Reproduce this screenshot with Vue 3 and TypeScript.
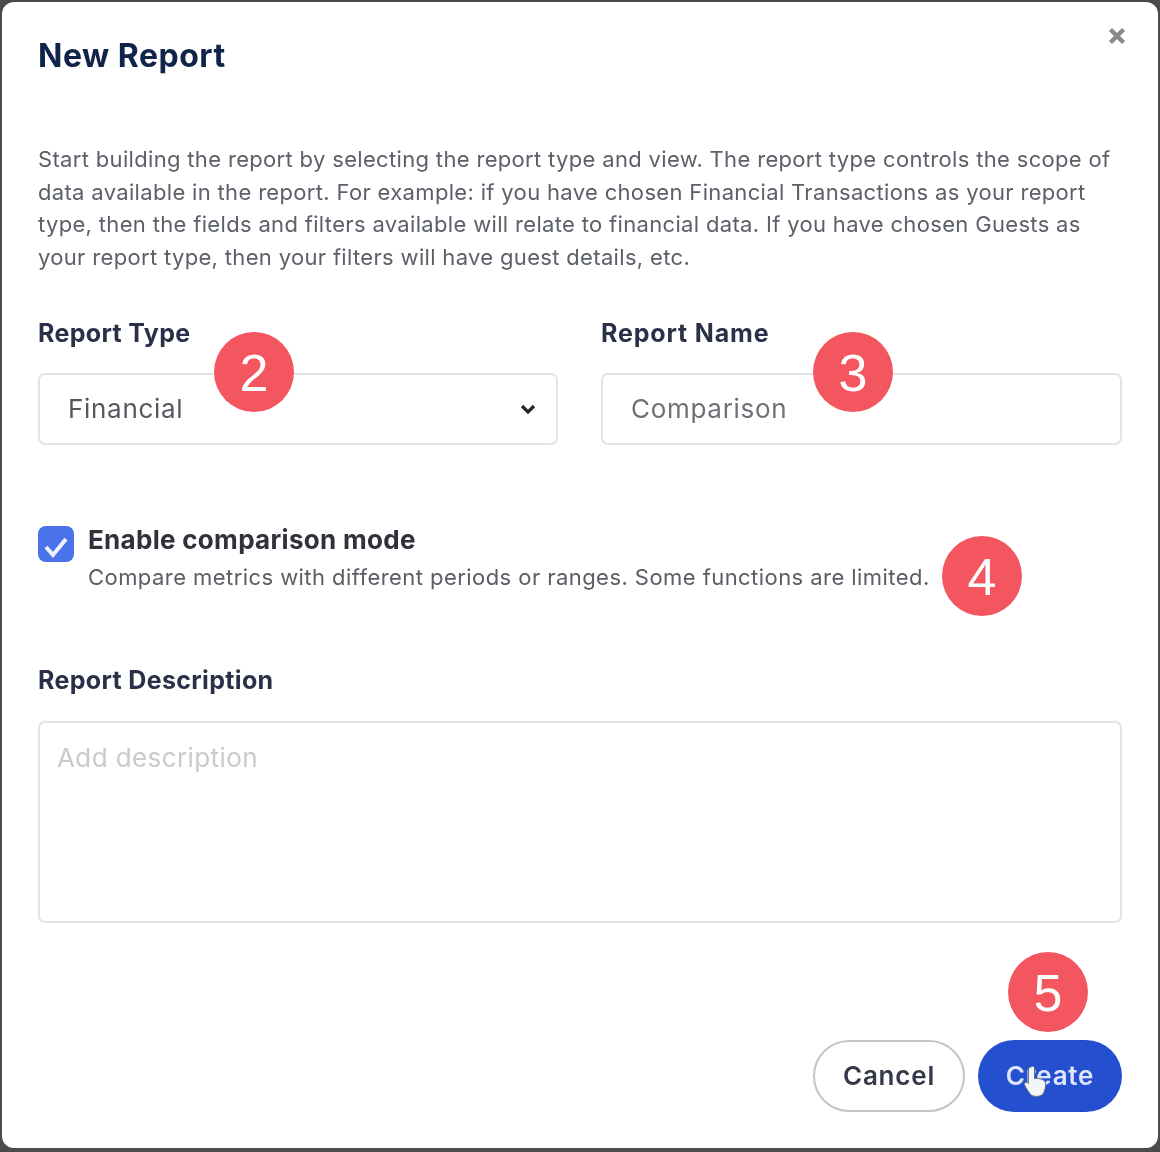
<template>
  <div class="page">
    <div class="modal">
      <button class="close" aria-label="Close">
        <svg width="20" height="20" viewBox="0 0 20 20"><path d="M3.5 3.5l13 13M16.5 3.5l-13 13" stroke="#8a8a8d" stroke-width="4.4" fill="none" /></svg>
      </button>
      <h1 class="title soft">New Report</h1>
      <p class="intro soft">
        <span v-for="line in introLines" :key="line">{{ line }}</span>
      </p>

      <div class="row">
        <div class="field">
          <label class="soft">Report Type</label>
          <div class="input select">
            <span class="soft">Financial</span>
            <svg class="soft" width="16" height="12" viewBox="0 0 16 12"><path d="M2 3l6 6 6-6" stroke="#23262f" stroke-width="3.2" fill="none" /></svg>
            <span class="badge badge-2">2</span>
          </div>
        </div>
        <div class="field">
          <label class="soft wide">Report Name</label>
          <div class="input name">
            <span class="soft">Comparison</span>
            <span class="badge badge-3">3</span>
          </div>
        </div>
      </div>

      <div class="compare">
        <span class="check soft">
          <svg width="36" height="36" viewBox="0 0 36 36"><path d="M8 21l7 8 13-16" stroke="#eef2ff" stroke-width="4" fill="none" /></svg>
        </span>
        <div>
          <div class="compare-title soft">Enable comparison mode</div>
          <div class="compare-sub">
            <span class="soft">Compare metrics with different periods or ranges. Some functions are limited.</span>
            <span class="badge badge-4">4</span>
          </div>
        </div>
      </div>

      <div class="field desc">
        <label class="soft">Report Description</label>
        <div class="textarea"><span class="soft">Add description</span></div>
      </div>

      <div class="actions">
        <button class="btn cancel"><span class="soft">Cancel</span></button>
        <button class="btn create">
          <span class="soft">Create</span>
          <span class="badge badge-5">5</span>
          <svg class="cursor soft" width="26" height="36" viewBox="0 0 26 36">
            <path d="M8 3c1.500-1.500 3.500-.5 3.500 1.500v10c3-.5 9 .5 10.500 3 1 3 .5 9-2.500 13-3 2.500-9 2.500-12 0-2-3-5-7-6-10-.5-2 2-3 4-1V4z" fill="#f4f5f8" stroke="#6a6f7c" stroke-width="1" />
          </svg>
        </button>
      </div>
    </div>
  </div>
</template>

<script setup lang="ts">
const introLines: string[] = [
  'Start building the report by selecting the report type and view. The report type controls the scope of',
  'data available in the report. For example: if you have chosen Financial Transactions as your report',
  'type, then the fields and filters available will relate to financial data. If you have chosen Guests as',
  'your report type, then your filters will have guest details, etc.',
]
</script>

<style>
body {
  background: #4b4b4d;
}
</style>

<style scoped>
.page {
  width: 1160px;
  height: 1152px;
  padding: 2px 2px 4px 2px;
  box-sizing: border-box;
  font-family: Inter, "Noto Sans", sans-serif;
}

.soft {
  display: inline-block;
  filter: blur(0.5px);
}

.modal {
  position: relative;
  height: 100%;
  box-sizing: border-box;
  background: #fff;
  border-radius: 12px;
  padding: 33px 36px 0 36px;
}

.close {
  position: absolute;
  top: 24px;
  right: 31px;
  padding: 0;
  border: 0;
  background: none;
  line-height: 0;
}

.title {
  display: block;
  margin: 0;
  font-size: 32px;
  line-height: 42px;
  font-weight: 700;
  letter-spacing: 0.5px;
  color: #10244a;
}

.intro {
  display: block;
  margin: 66px 0 0;
  font-size: 22px;
  line-height: 32.7px;
  letter-spacing: 0.33px;
  color: #5c6069;
  white-space: nowrap;
}

.intro span {
  display: block;
}

.row {
  display: grid;
  grid-template-columns: 520px 521px;
  column-gap: 43px;
  margin-top: 42px;
}

label {
  display: block;
  font-size: 25px;
  line-height: 34px;
  font-weight: 700;
  letter-spacing: 0.35px;
  color: #2a3048;
}

.wide {
  letter-spacing: 0.85px;
}

.input {
  position: relative;
  display: flex;
  align-items: center;
  justify-content: space-between;
  box-sizing: border-box;
  height: 72px;
  margin-top: 23px;
  padding: 0 20px 0 28px;
  border: 2px solid #e2e3e6;
  border-radius: 7px;
  font-size: 26px;
  letter-spacing: 0.7px;
  color: #55585f;
}

.input > span.soft {
  margin-top: -1px;
}

.name {
  color: #6d7076;
}

.badge {
  position: absolute;
  top: -43px;
  width: 80px;
  height: 80px;
  border-radius: 50%;
  background: #f4565f;
  color: #fff;
  font-family: "Liberation Sans", Arial, sans-serif;
  font-size: 52px;
  font-weight: 400;
  letter-spacing: 0;
  line-height: 82px;
  text-align: center;
}

.badge-2 {
  left: 174px;
}

.badge-3 {
  left: 210px;
}

.badge-4 {
  left: 854px;
  top: -24px;
}

.badge-5 {
  left: 30px;
  top: -88px;
}

.compare {
  display: flex;
  gap: 14px;
  margin-top: 78px;
}

.check {
  flex: none;
  width: 36px;
  height: 36px;
  margin-top: 3px;
  border-radius: 8px;
  background: #4a73ea;
}

.compare-title {
  display: block;
  font-size: 26px;
  line-height: 34px;
  font-weight: 700;
  letter-spacing: 0.3px;
  color: #2f323b;
}

.compare-sub {
  position: relative;
  margin-top: 3px;
  font-size: 22px;
  line-height: 34px;
  letter-spacing: 0.44px;
  color: #5a5d64;
  white-space: nowrap;
}

.desc {
  margin-top: 69px;
}

.textarea {
  box-sizing: border-box;
  height: 202px;
  margin-top: 24px;
  padding: 18px 17px;
  border: 2px solid #e2e3e6;
  border-radius: 7px;
  font-size: 26px;
  line-height: 34px;
  letter-spacing: 0.4px;
  color: #c9cace;
}

.actions {
  display: flex;
  justify-content: flex-end;
  gap: 13px;
  margin-top: 117px;
}

.btn {
  position: relative;
  height: 72px;
  border-radius: 36px;
  font-family: inherit;
  font-size: 26px;
  font-weight: 600;
  letter-spacing: 0.8px;
  padding: 0;
}

.cancel {
  width: 152px;
  background: #fff;
  border: 2px solid #c3c4c7;
  color: #343848;
}

.create {
  width: 144px;
  background: #2450cf;
  border: 0;
  color: #dfe6fb;
}

.cursor {
  position: absolute;
  left: 45px;
  top: 24px;
}
</style>
